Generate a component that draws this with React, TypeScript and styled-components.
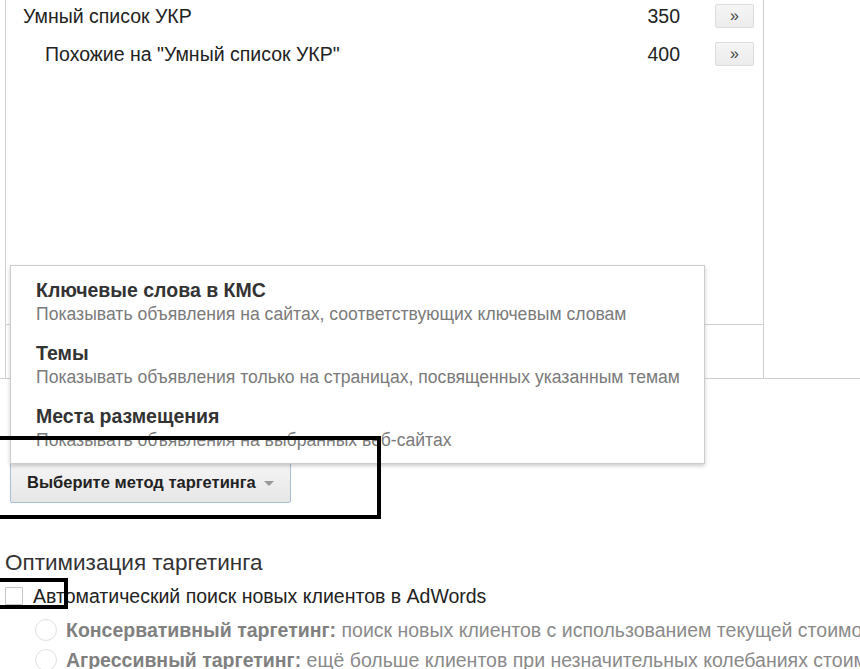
import React from "react";
import styled, { createGlobalStyle } from "styled-components";

const GlobalStyle = createGlobalStyle`
  html, body {
    margin: 0;
    padding: 0;
    background: #ffffff;
    overflow: hidden;
  }
  body {
    font-family: "Liberation Sans", Arial, sans-serif;
    color: #222222;
  }
`;

interface AudienceRow {
  name: string;
  size: number;
  level: number;
}

const rows: AudienceRow[] = [
  { name: "Умный список УКР", size: 350, level: 0 },
  { name: 'Похожие на "Умный список УКР"', size: 400, level: 1 },
];

const methods = [
  {
    title: "Ключевые слова в КМС",
    text: "Показывать объявления на сайтах, соответствующих ключевым словам",
  },
  {
    title: "Темы",
    text: "Показывать объявления только на страницах, посвященных указанным темам",
  },
  {
    title: "Места размещения",
    text: "Показывать объявления на выбранных веб-сайтах",
  },
];

const options = [
  {
    label: "Консервативный таргетинг:",
    text: " поиск новых клиентов с использованием текущей стоимости конверсии",
  },
  {
    label: "Агрессивный таргетинг:",
    text: " ещё больше клиентов при незначительных колебаниях стоимости конверсии",
  },
];

export default function App() {
  return (
    <Page>
      <GlobalStyle />
      <ListTable>
        <ListColumn>
          <ListBody>
            {rows.map((row) => (
              <Row key={row.name}>
                <RowName $level={row.level}>{row.name}</RowName>
                <RowSize>{row.size}</RowSize>
                <AddButton>»</AddButton>
              </Row>
            ))}
          </ListBody>
          <ListFooter />
        </ListColumn>
        <SideColumn />
      </ListTable>

      <MethodBar>
        <MethodButton>
          Выберите метод таргетинга
          <Caret />
        </MethodButton>
      </MethodBar>

      <Section>
        <SectionTitle>Оптимизация таргетинга</SectionTitle>
        <CheckRow>
          <CheckBox />
          Автоматический поиск новых клиентов в AdWords
        </CheckRow>
        {options.map((opt) => (
          <RadioRow key={opt.label}>
            <Radio />
            <RadioText>
              <b>{opt.label}</b>
              {opt.text}
            </RadioText>
          </RadioRow>
        ))}
      </Section>

      <Menu>
        {methods.map((m) => (
          <MenuItem key={m.title}>
            <MenuTitle>{m.title}</MenuTitle>
            <MenuText>{m.text}</MenuText>
          </MenuItem>
        ))}
      </Menu>

      <Highlight $top={436} $width={391} $height={83} />
      <Highlight $top={578} $width={78} $height={31} />
    </Page>
  );
}

const Page = styled.div`
  position: relative;
  width: 860px;
  height: 669px;
  overflow: hidden;
`;

const ListTable = styled.div`
  display: flex;
  margin-top: -3px;
  border-bottom: 1px solid #cfcfcf;
`;

const ListColumn = styled.div`
  width: 757px;
  margin-left: 5px;
  border-left: 1px solid #cfcfcf;
  border-right: 1px solid #cfcfcf;
`;

const SideColumn = styled.div`
  flex: 1;
`;

const ListBody = styled.div`
  height: 327px;
`;

const Row = styled.div`
  display: flex;
  align-items: center;
  height: 38px;
  padding-right: 9px;
`;

const RowName = styled.div<{ $level: number }>`
  flex: 1;
  padding-left: ${(p) => 17 + p.$level * 22}px;
  font-size: 19.5px;
  color: #222222;
`;

const RowSize = styled.div`
  width: 70px;
  text-align: right;
  font-size: 19.5px;
  color: #222222;
`;

const AddButton = styled.div`
  display: flex;
  align-items: center;
  justify-content: center;
  width: 37px;
  height: 22px;
  margin-left: 35px;
  background: linear-gradient(#f5f5f5, #ececec);
  border: 1px solid #dcdcdc;
  border-radius: 2px;
  font-size: 16px;
  color: #444444;
`;

const ListFooter = styled.div`
  height: 53px;
  border-top: 1px solid #cfcfcf;
`;

const MethodBar = styled.div`
  padding: 82px 0 0 10px;
`;

const MethodButton = styled.div`
  display: inline-flex;
  align-items: center;
  gap: 8px;
  width: 281px;
  height: 42px;
  box-sizing: border-box;
  padding: 0 0 0 16px;
  background: linear-gradient(#f6f6f6, #e6e6e6);
  border: 1px solid #a9bcd8;
  border-radius: 2px;
  font-size: 16.5px;
  font-weight: bold;
  color: #222222;
`;

const Caret = styled.span`
  width: 0;
  height: 0;
  margin-top: 2px;
  border-left: 5px solid transparent;
  border-right: 5px solid transparent;
  border-top: 5px solid #9a9a9a;
`;

const Section = styled.div`
  padding: 43px 0 0 5px;
`;

const SectionTitle = styled.div`
  height: 33px;
  line-height: 33px;
  font-size: 22.5px;
  color: #333333;
`;

const CheckRow = styled.div`
  display: flex;
  align-items: center;
  gap: 10px;
  height: 34px;
  margin-bottom: 2px;
  font-size: 19.5px;
  color: #222222;
`;

const CheckBox = styled.span`
  width: 16px;
  height: 16px;
  border: 1px solid #c4c4c4;
  border-radius: 1px;
`;

const RadioRow = styled.div`
  display: flex;
  align-items: center;
  gap: 9px;
  height: 30px;
  padding-left: 30px;
  white-space: nowrap;
`;

const Radio = styled.span`
  flex: none;
  width: 20px;
  height: 20px;
  border: 1px solid #e0e0e0;
  border-radius: 50%;
`;

const RadioText = styled.div`
  font-size: 19.5px;
  color: #8a8a8a;

  b {
    color: #808080;
  }
`;

const Menu = styled.div`
  position: absolute;
  top: 265px;
  left: 10px;
  width: 693px;
  height: 192px;
  padding-top: 5px;
  box-sizing: content-box;
  background: #ffffff;
  border: 1px solid #cccccc;
  box-shadow: 0 2px 4px rgba(0, 0, 0, 0.2);
`;

const MenuItem = styled.div`
  padding: 7px 0 8px 25px;
  white-space: nowrap;
`;

const MenuTitle = styled.div`
  line-height: 24px;
  font-size: 19.5px;
  font-weight: bold;
  color: #333333;
`;

const MenuText = styled.div`
  line-height: 24px;
  font-size: 17.6px;
  color: #7a7a7a;
`;

const Highlight = styled.div<{ $top: number; $width: number; $height: number }>`
  position: absolute;
  left: -10px;
  top: ${(p) => p.$top}px;
  width: ${(p) => p.$width}px;
  height: ${(p) => p.$height}px;
  box-sizing: border-box;
  border: 4px solid #000000;
`;
